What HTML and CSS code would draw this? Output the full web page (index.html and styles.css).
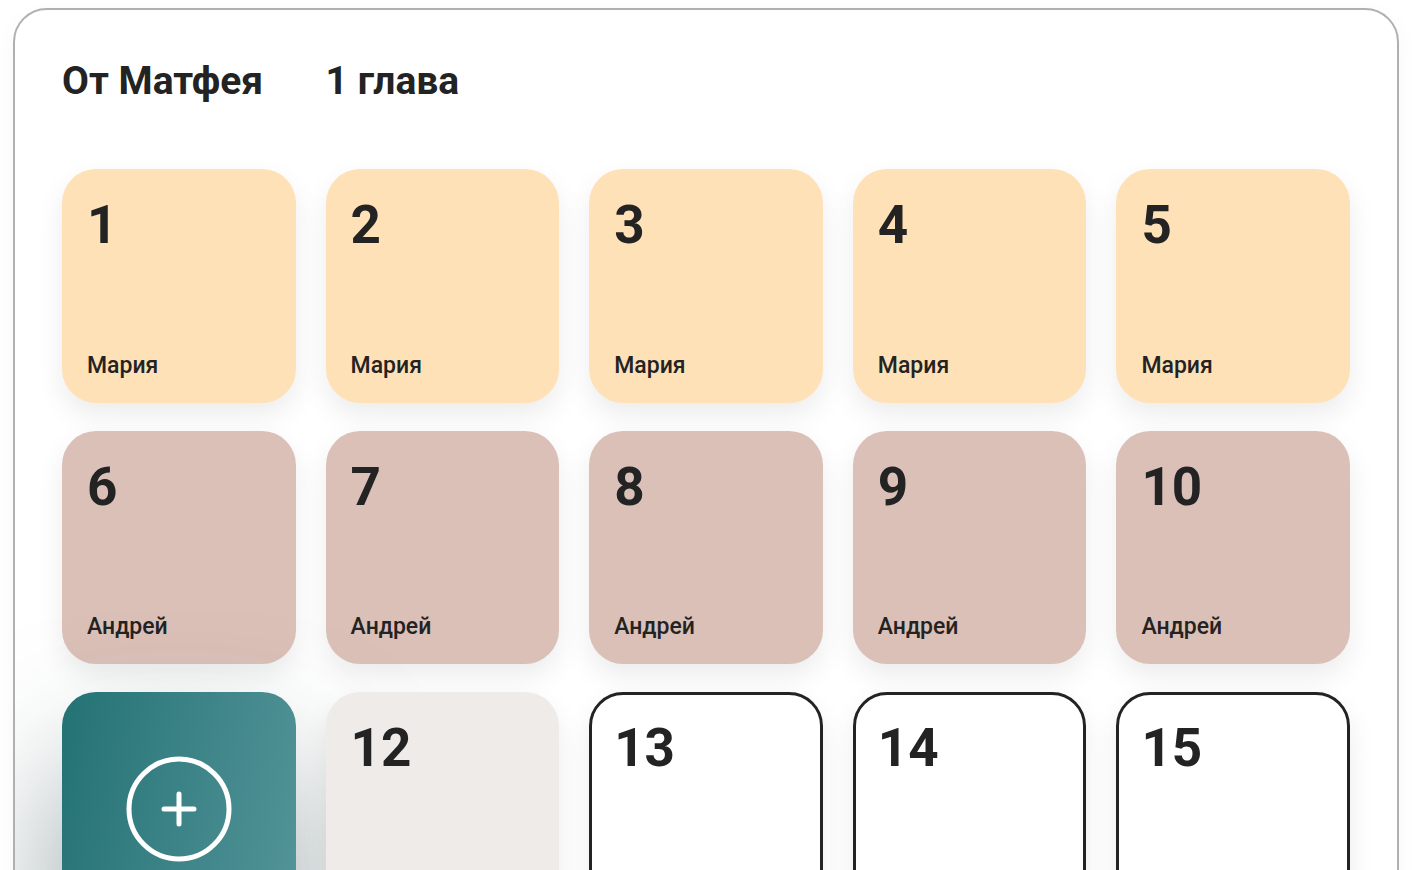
FILE: index.html
```html
<!DOCTYPE html>
<html lang="ru">
<head>
<meta charset="utf-8">
<meta name="viewport" content="width=device-width, initial-scale=1">
<title>От Матфея — 1 глава</title>
<link rel="stylesheet" href="styles.css">
</head>
<body>
<main class="panel">
  <header class="heading grid">
    <h1 class="title">От Матфея</h1>
    <h2 class="title">1 глава</h2>
  </header>
  <div class="verses grid">
    <button class="tile maria" type="button"><span class="number">1</span><span class="name">Мария</span></button>
    <button class="tile maria" type="button"><span class="number">2</span><span class="name">Мария</span></button>
    <button class="tile maria" type="button"><span class="number">3</span><span class="name">Мария</span></button>
    <button class="tile maria" type="button"><span class="number">4</span><span class="name">Мария</span></button>
    <button class="tile maria" type="button"><span class="number">5</span><span class="name">Мария</span></button>
    <button class="tile andrey" type="button"><span class="number">6</span><span class="name">Андрей</span></button>
    <button class="tile andrey" type="button"><span class="number">7</span><span class="name">Андрей</span></button>
    <button class="tile andrey" type="button"><span class="number">8</span><span class="name">Андрей</span></button>
    <button class="tile andrey" type="button"><span class="number">9</span><span class="name">Андрей</span></button>
    <button class="tile andrey" type="button"><span class="number">10</span><span class="name">Андрей</span></button>
    <button class="tile add" type="button" aria-label="Добавить">
      <svg class="plus" viewBox="0 0 106 106" fill="none" stroke="#fff" stroke-width="5" stroke-linecap="round" aria-hidden="true">
        <circle cx="53" cy="53" r="50"/>
        <path d="M53 38v30M38 53h30"/>
      </svg>
    </button>
    <button class="tile muted" type="button"><span class="number">12</span></button>
    <button class="tile free" type="button"><span class="number">13</span></button>
    <button class="tile free" type="button"><span class="number">14</span></button>
    <button class="tile free" type="button"><span class="number">15</span></button>
  </div>
</main>
</body>
</html>
```
FILE: styles.css
```css
* {
  box-sizing: border-box;
}

body {
  margin: 0;
  height: 100vh;
  padding: 8px 13px 0;
  overflow: hidden;
  background: #fff;
  color: #232323;
  font-family: Roboto, "Liberation Sans", sans-serif;
}

.panel {
  padding: 47px 47px 48px;
  border: 2px solid #b0b0b0;
  border-radius: 34px;
  background: #fff;
  box-shadow: 0 8px 24px rgba(0, 0, 0, 0.04);
  overflow: hidden;
}

.grid {
  display: grid;
  grid-template-columns: repeat(5, 1fr);
  column-gap: 30px;
}

.heading {
  margin-bottom: 64px;
}

.title {
  margin: 0;
  font-size: 39px;
  line-height: 48px;
  font-weight: 700;
  white-space: nowrap;
}

.verses {
  row-gap: 28px;
}

.tile {
  display: flex;
  flex-direction: column;
  justify-content: space-between;
  align-items: flex-start;
  aspect-ratio: 1;
  min-width: 0;
  padding: 21px 22px 20px;
  border: 3px solid transparent;
  border-radius: 34px;
  background-origin: border-box;
  box-shadow: 0 12px 28px rgba(0, 0, 0, 0.08);
  color: inherit;
  font-family: inherit;
  cursor: pointer;
}

.maria {
  background-color: #ffe1b7;
}

.andrey {
  background-color: #dbc0b8;
}

.muted {
  background-color: #efebe8;
}

.free {
  border-color: #232323;
  background-color: transparent;
}

.add {
  align-items: center;
  justify-content: center;
  padding: 20px;
  background-image: linear-gradient(100deg, #247275, #539498);
  box-shadow: 0 80px 136px rgba(36, 64, 68, 0.5);
}

.number {
  font-size: 53px;
  line-height: 64px;
  font-weight: 700;
}

.name {
  font-size: 23px;
  line-height: 28px;
  font-weight: 500;
}

.plus {
  width: 106px;
  height: 106px;
}
```
